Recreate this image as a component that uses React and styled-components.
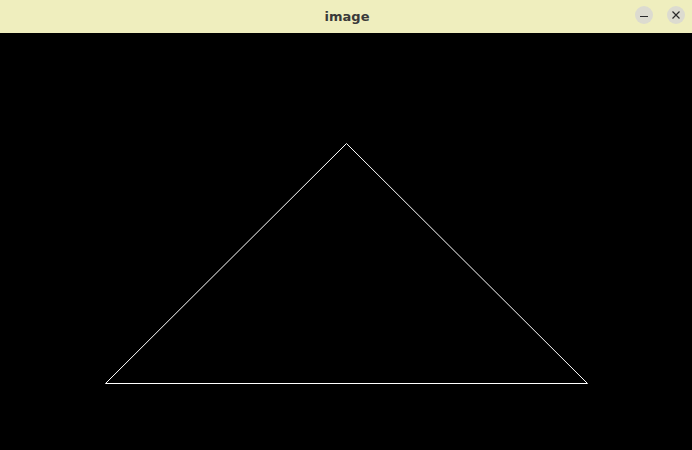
import React from "react";
import styled, { createGlobalStyle } from "styled-components";

const Global = createGlobalStyle`
  html, body { margin: 0; padding: 0; background: #000; }
  body { font-family: "DejaVu Sans", "Noto Sans", sans-serif; }
`;

const Window = styled.div`
  width: 692px;
  height: 450px;
  display: flex;
  flex-direction: column;
  overflow: hidden;
`;

const TitleBar = styled.div`
  height: 33px;
  flex: 0 0 33px;
  display: grid;
  grid-template-columns: 1fr auto 1fr;
  align-items: center;
  background-color: #efeebe;
`;

const Title = styled.div`
  grid-column: 2;
  font-family: "DejaVu Sans", sans-serif;
  font-weight: bold;
  font-size: 13px;
  color: #3a3a3a;
  padding-left: 2px;
  margin-top: -1px;
`;

const Controls = styled.div`
  grid-column: 3;
  justify-self: end;
  display: flex;
  gap: 14px;
  padding-right: 7px;
  margin-top: -3px;
`;

const CtrlButton = styled.div`
  width: 18px;
  height: 18px;
  border-radius: 50%;
  background: #dcdbd0;
  display: flex;
  align-items: center;
  justify-content: center;
`;

const Canvas = styled.div`
  flex: 1;
  background: #000;
`;

export default function App() {
  return (
    <Window>
      <Global />
      <TitleBar>
        <Title>image</Title>
        <Controls>
          <CtrlButton>
            <svg width="10" height="10" viewBox="0 0 10 10">
              <line x1="1" y1="6.5" x2="9" y2="6.5" stroke="#2a2a2a" strokeWidth="1" />
            </svg>
          </CtrlButton>
          <CtrlButton>
            <svg width="10" height="10" viewBox="0 0 10 10">
              <path d="M1.5 1.5 L8.5 8.5 M8.5 1.5 L1.5 8.5" stroke="#2a2a2a" strokeWidth="1.2" fill="none" />
            </svg>
          </CtrlButton>
        </Controls>
      </TitleBar>
      <Canvas>
        <svg width="692" height="417" viewBox="0 0 692 417">
          <polygon
            points="346.5,110.5 105.5,350.5 587.5,350.5"
            fill="none"
            stroke="#fff"
            strokeWidth="1"
          />
        </svg>
      </Canvas>
    </Window>
  );
}
